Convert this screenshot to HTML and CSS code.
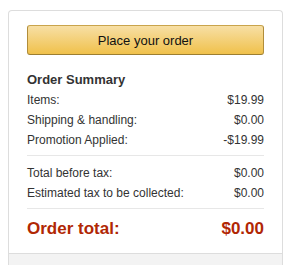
FILE: index.html
```html
<!DOCTYPE html>
<html lang="en">
<head>
    <meta charset="UTF-8" />
    <meta name="viewport" content="width=device-width, initial-scale=1.0" />
    <title>Order Summary</title>
    <link rel="stylesheet" href="styles.css">
</head>
<body>
    <div class="checkout-box">
      <div class="box-inner">
        <button class="place-order">Place your order</button>

        <h3 class="summary-title">Order Summary</h3>
        <div class="summary-row">
          <span>Items:</span>
          <span>$19.99</span>
        </div>
        <div class="summary-row">
          <span>Shipping &amp; handling:</span>
          <span>$0.00</span>
        </div>
        <div class="summary-row">
          <span>Promotion Applied:</span>
          <span>-$19.99</span>
        </div>

        <hr class="divider" />

        <div class="summary-row">
          <span>Total before tax:</span>
          <span>$0.00</span>
        </div>
        <div class="summary-row">
          <span>Estimated tax to be collected:</span>
          <span>$0.00</span>
        </div>

        <hr class="divider" />

        <div class="summary-row order-total">
          <span>Order total:</span>
          <span>$0.00</span>
        </div>
      </div>
      <div class="box-footer"></div>
    </div>
</body>
</html>
```

FILE: styles.css
```css
* {
  margin: 0;
  padding: 0;
  box-sizing: border-box;
}

body {
  font-family: "Liberation Sans", Arial, sans-serif;
  background-color: #ffffff;
  color: #333333;
  padding: 10px 0 0 8px;
}

.checkout-box {
  width: 275px;
  border: 1px solid #dddddd;
  border-bottom: none;
  border-radius: 4px 4px 0 0;
}

.box-inner {
  padding: 14px 18px 12px;
}

.place-order {
  display: block;
  width: 100%;
  height: 30px;
  font-family: inherit;
  font-size: 13px;
  color: #111111;
  background: linear-gradient(to bottom, #f7dfa5, #f0c14b);
  border: 1px solid #a88734;
  border-color: #c9a44c #b18d3a #9c7e31;
  border-radius: 3px;
  cursor: pointer;
}

.summary-title {
  font-size: 13px;
  font-weight: bold;
  color: #333333;
  line-height: 18px;
  margin-top: 16px;
  margin-bottom: 1px;
}

.summary-row {
  display: flex;
  justify-content: space-between;
  font-size: 12px;
  line-height: 20px;
}

.divider {
  border: none;
  border-top: 1px solid #e7e7e7;
  margin: 5px 0 7px;
}

.order-total {
  font-size: 17px;
  font-weight: bold;
  color: #b12704;
  line-height: 24px;
  padding-top: 1px;
}

.box-footer {
  height: 20px;
  background: #f3f3f3;
  border-top: 1px solid #dddddd;
}
```
